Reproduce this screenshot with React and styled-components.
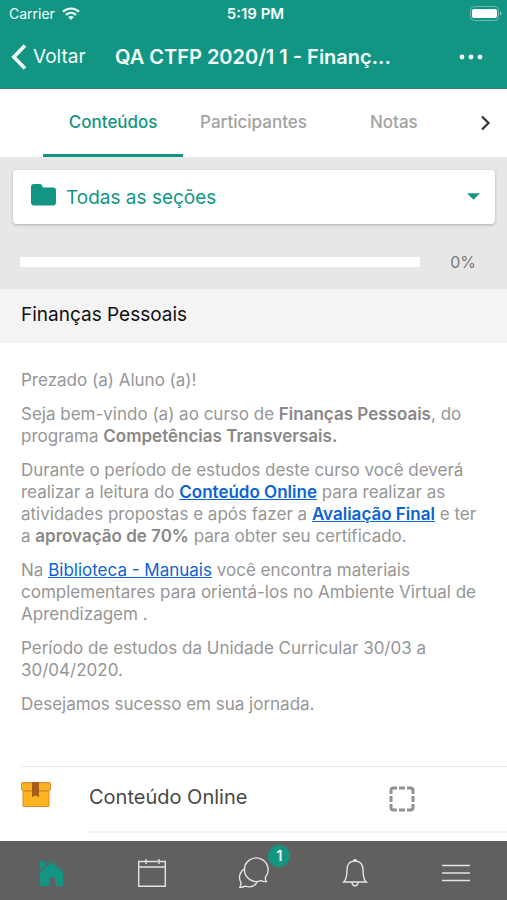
import React, { useState } from "react";
import styled, { createGlobalStyle } from "styled-components";

const GREEN = "#129683";

const GlobalStyle = createGlobalStyle`
  *, *::before, *::after { box-sizing: border-box; }
  body {
    margin: 0;
    background: #fff;
    font-family: Inter, "Liberation Sans", sans-serif;
    color: #969696;
  }
  button, select, input { font: inherit; color: inherit; margin: 0; }
  button { padding: 0; border: 0; background: none; cursor: pointer; }
  svg { display: block; flex: none; }
`;

const Screen = styled.div`
  display: flex;
  flex-direction: column;
  min-height: 100vh;
`;

const Header = styled.header`
  background: ${GREEN};
  color: #f4fffd;
  border-bottom: 1px solid #3b7f75;
`;

const StatusBar = styled.div`
  display: grid;
  grid-template-columns: 1fr auto 1fr;
  align-items: center;
  height: 27px;
  padding: 0 5px 0 9px;
  font-size: 14px;
  line-height: 20px;
`;

const Carrier = styled.span`
  display: flex;
  align-items: center;
  gap: 7px;
`;

const Clock = styled.time`
  font-size: 15px;
  font-weight: 600;
`;

const Battery = styled.span`
  justify-self: end;
`;

const NavBar = styled.div`
  display: grid;
  grid-template-columns: 92px 1fr 92px;
  align-items: center;
  height: 61px;
  padding: 0 11px 2px;
`;

const BackButton = styled.button`
  display: flex;
  align-items: center;
  gap: 6px;
  font-size: 19px;
  line-height: 24px;
`;

const Title = styled.h1`
  margin: 0 8px 0 12px;
  overflow: hidden;
  white-space: nowrap;
  text-overflow: ellipsis;
  font-size: 20px;
  line-height: 28px;
  font-weight: 600;
`;

const MoreButton = styled.button`
  justify-self: end;
  padding: 10px 13px;
`;

const Tabs = styled.nav`
  display: grid;
  grid-template-columns: 1fr 1fr 1fr;
  height: 68px;
  padding: 0 43px;
  position: relative;
  background: #fff;
`;

const Tab = styled.button`
  border-bottom: 3px solid ${(p) => (p.$active ? GREEN : "transparent")};
  color: ${(p) => (p.$active ? GREEN : "#a2a2a2")};
  font-size: 17px;
  font-weight: 500;
`;

const NextTabs = styled.button`
  position: absolute;
  right: 0;
  top: 0;
  height: 68px;
  padding: 0 16px;
`;

const Filter = styled.section`
  padding: 13px 12px 0 13px;
  background: #e7e7e7;
`;

const SectionPicker = styled.label`
  display: flex;
  align-items: center;
  gap: 10px;
  height: 54px;
  padding: 0 15px 0 18px;
  border-radius: 4px;
  background: #fff;
  box-shadow: 0 1px 3px rgba(0, 0, 0, 0.25);
  color: ${GREEN};
`;

const Select = styled.select`
  flex: 1;
  min-width: 0;
  height: 100%;
  padding: 0;
  border: 0;
  appearance: none;
  background: transparent;
  font-size: 19px;
`;

const ProgressRow = styled.div`
  display: flex;
  align-items: center;
  gap: 30px;
  height: 65px;
  padding: 11px 19px 0 7px;
  color: #777;
  font-size: 16px;
`;

const ProgressBar = styled.progress`
  flex: 1;
  min-width: 0;
  height: 10px;
  border: 0;
  appearance: none;
  background: #fff;
  &::-webkit-progress-bar { background: #fff; }
  &::-webkit-progress-value { background: ${GREEN}; }
`;

const SectionTitle = styled.h2`
  margin: 0;
  padding: 12px 21px 14px;
  background: #f4f4f4;
  color: #111;
  font-size: 19px;
  line-height: 28px;
  font-weight: 400;
`;

const Article = styled.article`
  padding: 26px 21px 51px;
  font-size: 17px;
  line-height: 22px;
`;

const Paragraph = styled.p`
  margin: 0 0 12px;
  &:last-child { margin-bottom: 0; }
`;

const Strong = styled.strong`
  color: #888;
  font-weight: 600;
`;

const Link = styled.a`
  color: #0c63d4;
  font-weight: ${(p) => (p.$strong ? 600 : 400)};
  text-decoration: underline;
`;

const Activity = styled.div`
  display: flex;
  margin-left: 21px;
  border-top: 1px solid #e8e8e8;
`;

const ActivityIcon = styled.span`
  width: 68px;
  padding-top: 14px;
`;

const ActivityBody = styled.div`
  display: flex;
  flex: 1;
  align-items: center;
  justify-content: space-between;
  height: 66px;
  padding: 0 92px 5px 0;
  border-bottom: 2px solid #f4f4f4;
`;

const ActivityLink = styled.a`
  color: #484848;
  font-size: 20px;
  text-decoration: none;
`;

const Completion = styled.label`
  display: grid;
  padding-top: 5px;
  cursor: pointer;
  > * { grid-area: 1 / 1; }
`;

const Checkbox = styled.input`
  width: 26px;
  height: 26px;
  appearance: none;
`;

const TabBar = styled.nav`
  position: sticky;
  bottom: 0;
  display: grid;
  grid-template-columns: repeat(5, 1fr);
  height: 59px;
  margin-top: auto;
  background: #606060;
  color: #e4e4e4;
`;

const TabBarButton = styled.button`
  display: grid;
  place-items: center;
  padding-top: 5px;
  color: ${(p) => (p.$active ? GREEN : "inherit")};
`;

const IconWrap = styled.span`
  position: relative;
`;

const Badge = styled.span`
  position: absolute;
  left: 31px;
  top: -12px;
  width: 22px;
  height: 22px;
  border-radius: 50%;
  background: ${GREEN};
  color: #fff;
  font-size: 14px;
  line-height: 22px;
  font-weight: 600;
  text-align: center;
`;

const WifiIcon = () => (
  <svg width="18" height="13" viewBox="0 0 18 13" fill="none" stroke="currentColor" strokeWidth="2.2" aria-hidden="true">
    <path d="M1 4.8C5.6.4 12.4.4 17 4.8M4 7.9c3-2.8 7-2.8 10 0" />
    <path d="M6.2 10.1c1.7-1.5 3.9-1.5 5.6 0L9 12.9z" fill="currentColor" stroke="none" />
  </svg>
);

const BatteryIcon = () => (
  <svg width="32" height="15" viewBox="0 0 32 15" aria-hidden="true">
    <rect x=".5" y=".5" width="28" height="14" rx="4" fill="none" stroke="#6dbcb0" />
    <rect x="2" y="3" width="25" height="9" rx="2" fill="#fff" />
    <path d="M30 5.5c2 .8 2 3.2 0 4z" fill="#8bccc2" />
  </svg>
);

const BackIcon = () => (
  <svg width="16" height="26" viewBox="0 0 16 26" fill="none" stroke="currentColor" strokeWidth="3.6" aria-hidden="true">
    <path d="M14 1.5L2.8 13 14 24.5" />
  </svg>
);

const MoreIcon = () => (
  <svg width="24" height="6" viewBox="0 0 24 6" fill="currentColor" aria-hidden="true">
    <circle cx="3" cy="3" r="2.4" /><circle cx="12" cy="3" r="2.4" /><circle cx="21" cy="3" r="2.4" />
  </svg>
);

const NextIcon = () => (
  <svg width="11" height="16" viewBox="0 0 11 16" fill="none" stroke="#333" strokeWidth="2.2" aria-hidden="true">
    <path d="M2 1.5L8.5 8 2 14.5" />
  </svg>
);

const FolderIcon = () => (
  <svg width="25" height="26" viewBox="0 0 25 26" fill="currentColor" aria-hidden="true">
    <path d="M2.8 0h6c1.7 0 2.8 1.2 2.8 3.6h10.6C24 3.6 25 4.7 25 6.4v12.1c0 1.9-1.100 3-2.900 3H2.900C1.100 21.500 0 20.400 0 18.600V2.900C0 1.100 1.100 0 2.800 0z" />
  </svg>
);

const CaretIcon = () => (
  <svg width="13" height="9" viewBox="0 0 13 9" fill="currentColor" aria-hidden="true">
    <path d="M0 .3h13L6.500 6.800z" />
  </svg>
);

const PackageIcon = () => (
  <svg width="30" height="27" viewBox="0 0 30 27" aria-hidden="true">
    <path d="M2 8h26v17.500H2z" fill="#fcb521" stroke="#dd8a25" />
    <path d="M3 9.500h24v1.500H3z" fill="#e89a20" />
    <rect x=".5" y="1.500" width="29" height="8" rx="1" fill="#fbb324" stroke="#e28e25" />
    <path d="M1 2h28" stroke="#e49a38" />
    <path d="M11 1h7v15l-3.500-1.500L11 16z" fill="#a65d17" />
  </svg>
);

const DashedBoxIcon = () => (
  <svg width="26" height="26" viewBox="0 0 26 26" fill="none" stroke="#929292" strokeWidth="3" aria-hidden="true">
    <path d="M2 8V4.500Q2 2 4.500 2H8M18 2h3.500Q24 2 24 4.500V8M24 18v3.500q0 2.500-2.500 2.500H18M8 24H4.500Q2 24 2 21.500V18M10 2h6M24 10v6M16 24h-6M2 16v-6" />
  </svg>
);

const HomeIcon = () => (
  <svg width="28" height="28" viewBox="0 0 28 28" fill="currentColor" aria-hidden="true">
    <path d="M3 2h5v4l-5 4z" />
    <path d="M14 3.500L26 13v14h-7.500v-8.500h-6V27H3V13z" />
    <path d="M1 12.500L14 1.200 27 12.500" fill="none" stroke="currentColor" strokeWidth=".7" />
  </svg>
);

const CalendarIcon = () => (
  <svg width="28" height="28" viewBox="0 0 28 28" fill="none" stroke="currentColor" strokeWidth="1.400" aria-hidden="true">
    <path d="M8 2.500H.7v24.800h26.600V2.500H21M8 2.500h12M.7 8h26.600M8 0v5M21 0v5" />
  </svg>
);

const ChatIcon = () => (
  <svg width="32" height="32" viewBox="0 0 32 32" fill="none" stroke="currentColor" strokeWidth="1.400" aria-hidden="true">
    <path d="M29.300 24.600c-2.300.2-4-.1-5.500-1A11.800 11.800 0 1 1 28.300 20.300c-.1 1.700.3 2.900 1 4.300z" />
    <path d="M7.200 12C2.300 15.200 1.200 21.300 4 25.700c.1 1.600-.3 2.900-1.100 4.600 2.200.1 3.700-.3 5.200-1.200 5 1.600 9.600.1 12-3.900" />
  </svg>
);

const BellIcon = () => (
  <svg width="26" height="28" viewBox="0 0 26 28" fill="none" stroke="currentColor" strokeWidth="1.400" aria-hidden="true">
    <path d="M13 2c-5.500 0-8 4-8 8.500 0 6.500-.7 10.300-3.300 12.500h22.600C21.700 20.800 21 17 21 10.500 21 6 18.500 2 13 2zM11.500 2c0-1.800 3-1.800 3 0M10 23c0 5 6 5 6 0" />
  </svg>
);

const MenuIcon = () => (
  <svg width="28" height="20" viewBox="0 0 28 20" fill="none" stroke="currentColor" strokeWidth="1.600" aria-hidden="true">
    <path d="M0 2.500h28M0 10h28M0 17.500h28" />
  </svg>
);

const tabs = ["Conteúdos", "Participantes", "Notas"];

const destinations = [
  { label: "Início", Icon: HomeIcon },
  { label: "Calendário", Icon: CalendarIcon },
  { label: "Mensagens", Icon: ChatIcon, count: 1 },
  { label: "Notificações", Icon: BellIcon },
  { label: "Menu", Icon: MenuIcon },
];

export default function App() {
  const [tab, setTab] = useState(tabs[0]);
  const [place, setPlace] = useState("Início");

  return (
    <Screen>
      <GlobalStyle />
      <Header>
        <StatusBar>
          <Carrier>Carrier <WifiIcon /></Carrier>
          <Clock>5:19 PM</Clock>
          <Battery><BatteryIcon /></Battery>
        </StatusBar>
        <NavBar>
          <BackButton><BackIcon />Voltar</BackButton>
          <Title>QA CTFP 2020/1 1 - Finanç...</Title>
          <MoreButton aria-label="Mais opções"><MoreIcon /></MoreButton>
        </NavBar>
      </Header>
      <Tabs aria-label="Curso">
        {tabs.map((name) => (
          <Tab key={name} $active={name === tab} onClick={() => setTab(name)}>{name}</Tab>
        ))}
        <NextTabs aria-label="Próximas abas"><NextIcon /></NextTabs>
      </Tabs>
      <main>
        <Filter>
          <SectionPicker>
            <FolderIcon />
            <Select aria-label="Seção">
              <option>Todas as seções</option>
              <option>Finanças Pessoais</option>
            </Select>
            <CaretIcon />
          </SectionPicker>
          <ProgressRow>
            <ProgressBar value="0" max="100" aria-label="Progresso" />
            <span>0%</span>
          </ProgressRow>
        </Filter>
        <SectionTitle>Finanças Pessoais</SectionTitle>
        <Article>
          <Paragraph>Prezado (a) Aluno (a)!</Paragraph>
          <Paragraph>
            Seja bem-vindo (a) ao curso de <Strong>Finanças Pessoais</Strong>, do programa{" "}
            <Strong>Competências Transversais.</Strong>
          </Paragraph>
          <Paragraph>
            Durante o período de estudos deste curso você deverá realizar a leitura do{" "}
            <Link $strong href="#conteudo">Conteúdo Online</Link> para realizar as atividades propostas e após fazer a{" "}
            <Link $strong href="#avaliacao">Avaliação Final</Link> e ter a <Strong>aprovação de 70%</Strong> para obter seu certificado.
          </Paragraph>
          <Paragraph>
            Na <Link href="#biblioteca">Biblioteca - Manuais</Link> você encontra materiais complementares para
            orientá-los no Ambiente Virtual de Aprendizagem .
          </Paragraph>
          <Paragraph>Período de estudos da Unidade Curricular 30/03 a 30/04/2020.</Paragraph>
          <Paragraph>Desejamos sucesso em sua jornada.</Paragraph>
        </Article>
        <Activity>
          <ActivityIcon><PackageIcon /></ActivityIcon>
          <ActivityBody>
            <ActivityLink href="#conteudo">Conteúdo Online</ActivityLink>
            <Completion>
              <Checkbox type="checkbox" aria-label="Conteúdo Online concluído" />
              <DashedBoxIcon />
            </Completion>
          </ActivityBody>
        </Activity>
      </main>
      <TabBar aria-label="Principal">
        {destinations.map(({ label, Icon, count }) => (
          <TabBarButton key={label} aria-label={label} $active={label === place} onClick={() => setPlace(label)}>
            <IconWrap>
              <Icon />
              {count && <Badge>{count}</Badge>}
            </IconWrap>
          </TabBarButton>
        ))}
      </TabBar>
    </Screen>
  );
}
